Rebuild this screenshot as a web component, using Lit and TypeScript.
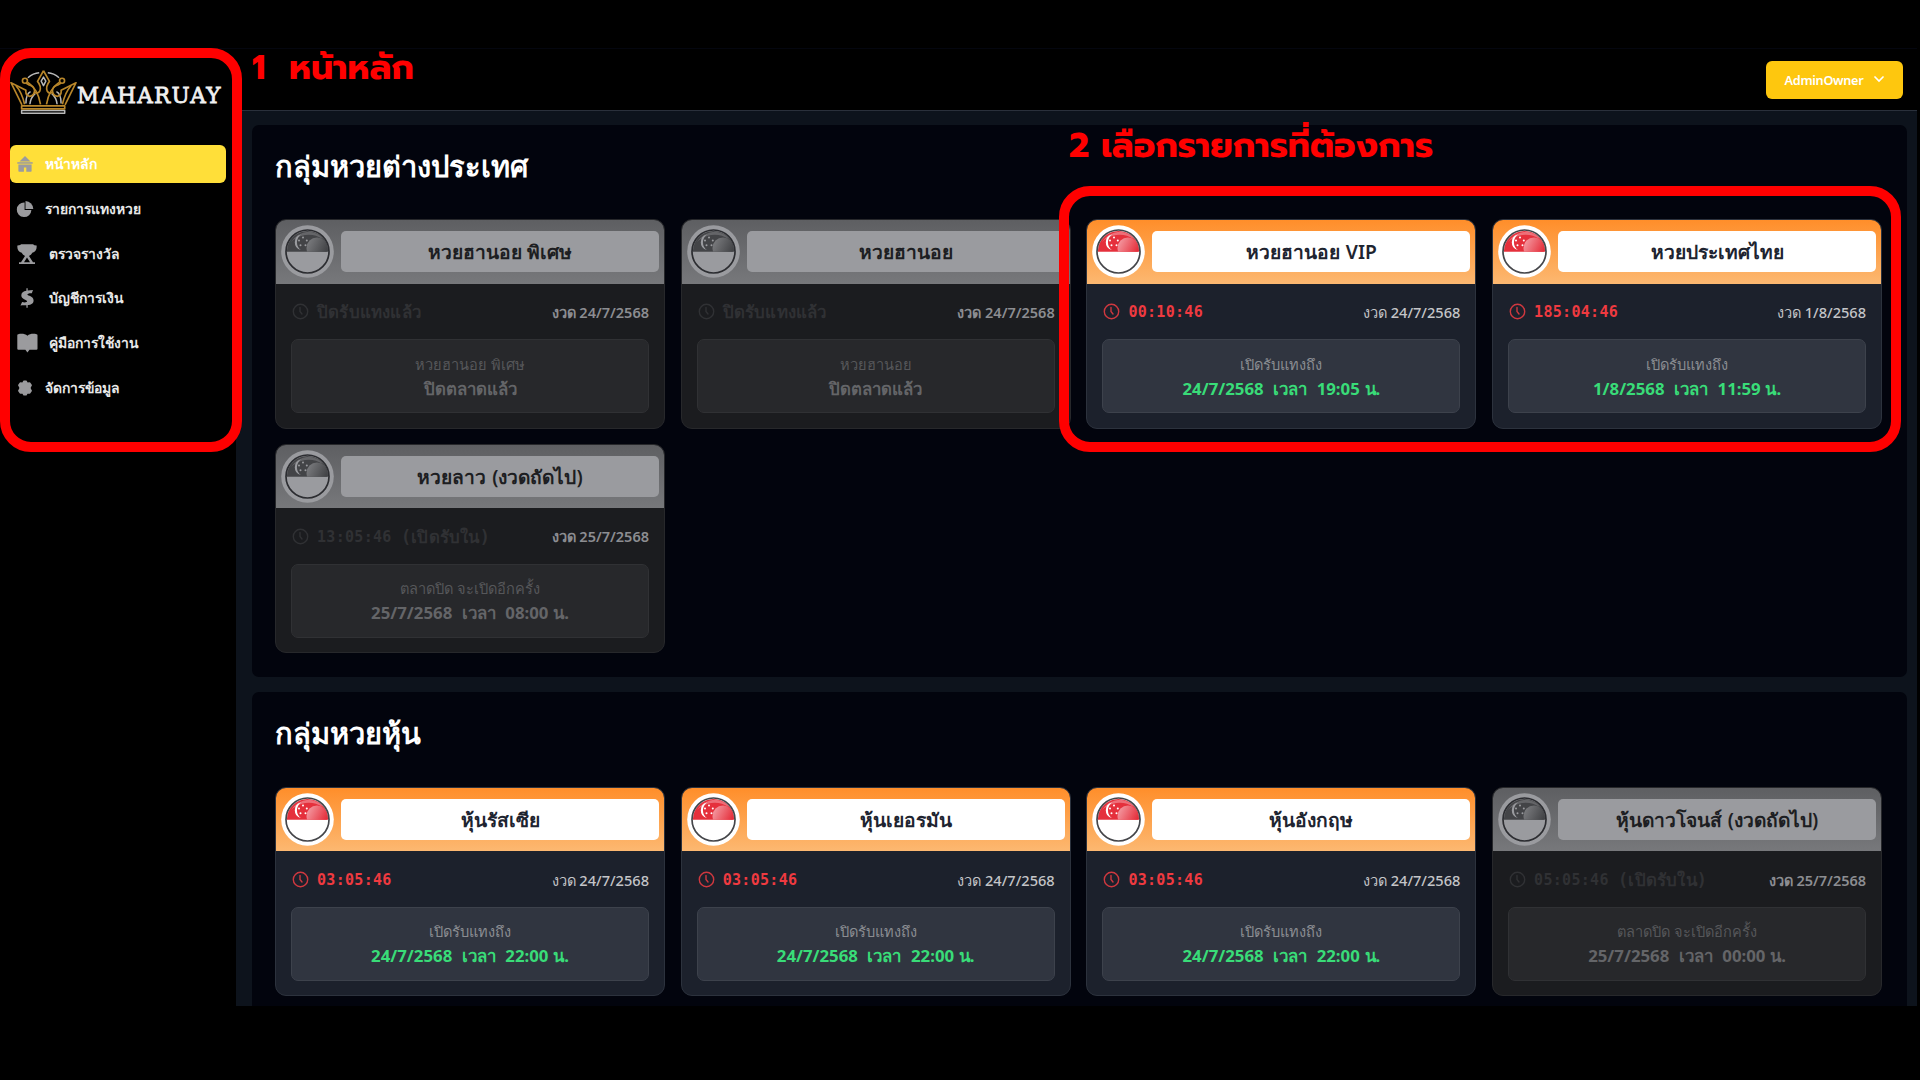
import { LitElement, html, svg, css, nothing } from "lit";
import { customElement, property } from "lit/decorators.js";
import { classMap } from "lit/directives/class-map.js";

interface Round {
  name: string;
  timer?: string;
  note?: string;
  draw: string;
  label: string;
  value: string;
  closed?: boolean;
}

const SANS = css`"Noto Sans", "Open Sans", sans-serif`;

const foreign: Round[] = [
  { name: "หวยฮานอย พิเศษ", note: "ปิดรับแทงแล้ว", draw: "งวด 24/7/2568", label: "หวยฮานอย พิเศษ", value: "ปิดตลาดแล้ว", closed: true },
  { name: "หวยฮานอย", note: "ปิดรับแทงแล้ว", draw: "งวด 24/7/2568", label: "หวยฮานอย", value: "ปิดตลาดแล้ว", closed: true },
  { name: "หวยฮานอย VIP", timer: "00:10:46", draw: "งวด 24/7/2568", label: "เปิดรับแทงถึง", value: "24/7/2568  เวลา  19:05 น." },
  { name: "หวยประเทศไทย", timer: "185:04:46", draw: "งวด 1/8/2568", label: "เปิดรับแทงถึง", value: "1/8/2568  เวลา  11:59 น." },
  { name: "หวยลาว (งวดถัดไป)", timer: "13:05:46 ", note: "(เปิดรับใน)", draw: "งวด 25/7/2568", label: "ตลาดปิด จะเปิดอีกครั้ง", value: "25/7/2568  เวลา  08:00 น.", closed: true },
];

const stocks: Round[] = [
  { name: "หุ้นรัสเซีย", timer: "03:05:46", draw: "งวด 24/7/2568", label: "เปิดรับแทงถึง", value: "24/7/2568  เวลา  22:00 น." },
  { name: "หุ้นเยอรมัน", timer: "03:05:46", draw: "งวด 24/7/2568", label: "เปิดรับแทงถึง", value: "24/7/2568  เวลา  22:00 น." },
  { name: "หุ้นอังกฤษ", timer: "03:05:46", draw: "งวด 24/7/2568", label: "เปิดรับแทงถึง", value: "24/7/2568  เวลา  22:00 น." },
  { name: "หุ้นดาวโจนส์ (งวดถัดไป)", timer: "05:05:46 ", note: "(เปิดรับใน)", draw: "งวด 25/7/2568", label: "ตลาดปิด จะเปิดอีกครั้ง", value: "25/7/2568  เวลา  00:00 น.", closed: true },
];

const icons = {
  home: svg`<path d="M8 0 13.500 5.600H2.500Z"/><path d="M.3 6.200h15.400v1.500H.3Z"/><path d="M1.400 8.500h13.200V15a.8.8 0 0 1-.8.8H9.300v-4.400H6.900v4.400H2.200a.8.8 0 0 1-.8-.8Z"/>`,
  pie: svg`<path d="M7.600 1.500v7.500h6.800A7.300 7.300 0 1 1 7.600 1.500Z"/><path d="M8.500 0A8 8 0 0 1 16.300 8H8.500Z"/>`,
  trophy: svg`<path d="M4 .2h12q1 1.300 3.600 1.300c.5 4-1.300 6.500-4.300 7.300-.8 1.500-1.900 2.500-3.300 3.100L16 18.200h2V20H2v-1.800h2l4-6.300C6.600 11.300 5.500 10.300 4.700 8.800 1.700 8-.1 5.500.4 1.500 3 1.500 4 .2 4 .2ZM10 13.400l-3 4.800h6Z"/>`,
  dollar: svg`<path d="M9.400.2h1.300v2.400l5.300-.6-1.200 3.200c-2.600-.2-4.400.4-4.400 1.400.2 1.400 6.200 1.500 6.200 6 0 3-2.400 4.400-5.900 4.500v2.700H9.400v-2.600c-2.200-.1-4.400-.1-5.900.3l1.600-3.400c2.300.5 5 .4 5-.8-.2-1.600-5.800-1.700-5.800-6C4.300 4.600 6.300 3 9.400 2.700Z"/>`,
  book: svg`<path d="M1.200 1.200C4 .6 8 .5 10.400 2.700 12.800.5 16.800.6 19.600 1.200a1 1 0 0 1 .9 1v13.600a1 1 0 0 1-1 1h-7L10.400 19.400l-2-2.600H1.300a1 1 0 0 1-1-1V2.200a1 1 0 0 1 .9-1Z"/>`,
  gear: svg`<path stroke="#9b9b9e" stroke-width="1.600" stroke-linejoin="round" d="M7 1.200h2l1.200 2.100 2.500-.2 1.400 2.200L13 7.200v1.600l1.100 1.900-1.400 2.200-2.500-.2L9 14.800H7l-1.200-2.100-2.500.2-1.400-2.200L3 8.800V7.200L1.900 5.300l1.400-2.200 2.500.2Z"/>`,
};

const menu = [
  { label: "หน้าหลัก", icon: icons.home, size: 16 },
  { label: "รายการแทงหวย", icon: icons.pie, size: 16 },
  { label: "ตรวจรางวัล", icon: icons.trophy, size: 20 },
  { label: "บัญชีการเงิน", icon: icons.dollar, size: 20 },
  { label: "คู่มือการใช้งาน", icon: icons.book, size: 20 },
  { label: "จัดการข้อมูล", icon: icons.gear, size: 16 },
];

@customElement("round-card")
export class RoundCard extends LitElement {
  @property({ attribute: false }) round!: Round;

  static styles = css`
    :host { display: block; font-family: ${SANS}; }
    .card {
      box-sizing: border-box; height: 209.600px; border: 1px solid #2c323d; border-radius: 11px;
      background: #1c212c; overflow: hidden; display: flex; flex-direction: column;
    }
    .head {
      flex: none; height: 63.500px; box-sizing: border-box; display: flex; align-items: center;
      gap: 7px; padding: 0 5px; background: linear-gradient(#ff8e2a, #fcb871);
    }
    .flag { flex: none; width: 53px; height: 53px; display: block; }
    .name {
      flex: 1; height: 41px; border-radius: 5px; background: #fff; color: #1e2430;
      display: flex; align-items: center; justify-content: center;
      font-size: 19.200px; font-weight: 600; white-space: pre; word-spacing: 1px;
    }
    .body { flex: 1; display: flex; flex-direction: column; padding: 20.200px 15px 14px; }
    .line { height: 16px; display: flex; align-items: center; padding-left: 1px; }
    .clock { width: 17px; height: 17px; flex: none; }
    .timer {
      margin-left: 8px; flex: 1; display: flex; align-items: center; color: #ef3a40; white-space: pre;
      font-family: "DejaVu Sans Mono", ${SANS}; font-weight: 700; font-size: 15px; letter-spacing: 0.300px; line-height: 17px;
      padding-top: 2px;
    }
    .wait { font-size: 16.800px; letter-spacing: 0.200px; }
    .draw { color: #c4c5c8; font-size: 14.600px; font-weight: 500; line-height: 16px; white-space: pre; }
    .info {
      margin-top: 19.400px; height: 74px; box-sizing: border-box; border: 1px solid #3d424c;
      border-radius: 7px; background: #303540; display: flex; flex-direction: column;
      align-items: center; padding-top: 11.300px;
    }
    .label { color: #8b8d92; font-size: 14.600px; line-height: 24px; white-space: pre; word-spacing: 1px; }
    .value { color: #39dc78; font-size: 16.800px; font-weight: 700; line-height: 26px; white-space: pre; word-spacing: 0.400px; }
    .closed { background: #1b1c1f; border-color: #27282b; }
    .closed .head { background: linear-gradient(#5e5f62, #77787b); }
    .closed .name { background: #9a9b9f; color: #1d1e22; }
    .closed .timer { color: #303134; }
    .closed .draw { color: #8c8d91; font-weight: 600; font-size: 14.500px; }
    .closed .info { background: #27282b; border-color: #303134; }
    .closed .label { color: #56575a; }
    .closed .value { color: #646568; }
  `;

  render() {
    const r = this.round;
    const off = !!r.closed;
    const paper = off ? "#9a9b9f" : "#fff";
    const dark = off ? "#434447" : "#e5303c";
    const light = off ? "#7b7c7f" : "#f49aa2";
    return html`
      <div class=${classMap({ card: true, closed: off })}>
        <div class="head">
          <svg class="flag" viewBox="0 0 53 53">
            <defs>
              <linearGradient id="gloss" x1="0" y1="0" x2="1" y2="0.5">
                <stop offset="0.1" stop-color=${light} /><stop offset="1" stop-color=${dark} />
              </linearGradient>
              <clipPath id="top"><path d="M5 5h43v21.800H5Z" /></clipPath>
            </defs>
            <circle cx="26.500" cy="26.500" r="26.300" fill=${paper} />
            <g clip-path="url(#top)">
              <circle cx="26.500" cy="26.500" r="20.600" fill=${dark} />
              <circle cx="36" cy="23" r="10.500" fill="url(#gloss)" />
              <path d="M10 17Q17 7.500 27 6.800Q37 7 42 14Q33 8.500 24 10Q16 11.500 10 17Z" fill=${light} opacity="0.600" />
            </g>
            <path d="M20 9.500a8 8 0 0 0 0 15.600a9.500 9.500 0 0 1 0-15.600Z" fill=${paper} />
            <g fill=${paper}>
              <circle cx="22" cy="12.500" r="1" /><circle cx="18" cy="15.600" r="1" /><circle cx="25.800" cy="15.600" r="1" />
              <circle cx="19.500" cy="20.300" r="1" /><circle cx="24.500" cy="20.300" r="1" />
            </g>
            <circle cx="26.500" cy="26.500" r="21.500" fill="none" stroke=${off ? "#2c2d31" : "#45464a"} stroke-width="1.700" />
          </svg>
          <div class="name">${r.name}</div>
        </div>
        <div class="body">
          <div class="line">
            <svg class="clock" viewBox="0 0 17 17" fill="none" stroke=${off ? "#303134" : "#cf383f"} stroke-width="1.400" stroke-linecap="round">
              <circle cx="8.500" cy="8.500" r="7.200" /><path d="M8 4.500V8.500L10 11" />
            </svg>
            <div class="timer">${r.timer ? html`<span>${r.timer}</span>` : nothing}${r.note ? html`<span class="wait">${r.note}</span>` : nothing}</div>
            <span class="draw">${r.draw}</span>
          </div>
          <div class="info">
            <div class="label">${r.label}</div>
            <div class="value">${r.value}</div>
          </div>
        </div>
      </div>
    `;
  }
}

@customElement("app-root")
export class AppRoot extends LitElement {
  static styles = css`
    :host {
      display: block; position: relative; width: 1920px; height: 1080px; box-sizing: border-box;
      padding: 48px 3px 74px 0; background: #000; overflow: hidden; font-family: ${SANS};
    }
    .screen { height: 958px; display: flex; background: #000; border-top: 1px solid #04060f; box-sizing: border-box; overflow: hidden; }
    .side { flex: none; width: 236px; padding: 20px 10px 0; box-sizing: border-box; }
    .logo { display: flex; align-items: center; height: 46px; }
    .crown { flex: none; width: 67px; height: 46px; }
    .brand {
      color: #f0f0f0; font-family: "DejaVu Serif", serif; font-size: 21.500px; -webkit-text-stroke: 0.800px #f0f0f0;
      letter-spacing: 1.300px; line-height: 38px; padding-top: 8px;
    }
    .menu { margin-top: 30px; display: flex; flex-direction: column; gap: 7.400px; }
    .item {
      height: 37.500px; display: flex; align-items: center; gap: 12px; padding-left: 7px; border-radius: 6px;
      color: #e8e8e8; font-size: 13.900px; font-weight: 600; white-space: pre;
    }
    .item svg { fill: #9b9b9e; flex: none; overflow: visible; }
    .active { background: #ffdf39; color: #fff; }
    .page { flex: 1; display: flex; flex-direction: column; min-width: 0; }
    .bar {
      flex: none; height: 62px; box-sizing: border-box; border-bottom: 1px solid #2a303b;
      display: flex; justify-content: flex-end; padding: 12px 14px 0 0;
    }
    .user {
      width: 137px; height: 37.500px; box-sizing: border-box; border-radius: 6px; background: #fec70e; color: #fff;
      display: flex; align-items: center; justify-content: center; gap: 11px;
      font-family: "Noto Sans", sans-serif; font-size: 12.700px; font-weight: 600; letter-spacing: -0.300px;
    }
    .user svg { width: 10px; height: 10px; margin-bottom: 2px; }
    .main { flex: 1; min-height: 0; background: #0d131c; padding: 13.500px 10px 0 16px; display: flex; flex-direction: column; gap: 14.800px; overflow: hidden; }
    .panel { flex: none; box-sizing: border-box; background: #02040d; border-radius: 7px; padding: 22px 24px 24px 23px; }
    .title { margin: 0; color: #fff; font-size: 29px; line-height: 38px; font-weight: 700; white-space: pre; }
    .grid { margin-top: 34.700px; display: grid; grid-template-columns: repeat(4, 390px); column-gap: 15.700px; row-gap: 15px; }
    .frame { position: absolute; box-sizing: border-box; border: 10px solid #f00; border-radius: 31px; }
    .one { left: 0; top: 48px; width: 242px; height: 404px; }
    .two { left: 1059px; top: 186px; width: 842px; height: 266px; }
    .note {
      position: absolute; color: #f00; font-family: "Prompt", ${SANS}; font-weight: 700; white-space: pre; line-height: 40px; font-size: 34.600px;
    }
    .note-one { left: 252px; top: 48px; }
    .note-two { left: 1069px; top: 126px; }
  `;

  private panel(title: string, rounds: Round[]) {
    return html`<section class="panel">
      <h2 class="title">${title}</h2>
      <div class="grid">${rounds.map((r) => html`<round-card .round=${r}></round-card>`)}</div>
    </section>`;
  }

  render() {
    return html`
      <div class="screen">
        <aside class="side">
          <div class="logo">
            <svg class="crown" viewBox="30 86 202 138" fill="none" stroke-linejoin="round" stroke-width="4.500">
              <g stroke="#b9b9b9">
                <path d="M84 112Q100 98 118 97M178 112Q162 98 144 97M78 190Q78 160 92 154M184 190Q184 160 170 154M90 192Q92 172 106 160M172 192Q170 172 156 160" />
                <path d="M131 110 138 122 131 136 124 122Z" /><path d="M65 211H195V219H65Z" />
              </g>
              <g stroke="#b8862a" stroke-width="5">
                <path d="M131 91 149 123Q137 138 142 152Q148 162 158 156M131 91 113 123Q125 138 120 152Q114 162 104 156" />
                <path d="M66 194 33 127 78 150Q76 164 88 168Q104 168 104 150Q102 138 88 134L78 128" />
                <path d="M196 194 229 127 184 150Q186 164 174 168Q158 168 158 150Q160 138 174 134L184 128" />
                <path d="M48 136Q66 156 74 192M214 136Q196 156 188 192M84 126Q114 146 122 192M178 126Q148 146 140 192" />
                <circle cx="75" cy="121" r="7.500" /><circle cx="187" cy="121" r="7.500" />
                <path d="M65 197H195V206H65Z" />
              </g>
            </svg>
            <span class="brand">MAHARUAY</span>
          </div>
          <nav class="menu">
            ${menu.map(
              (m, i) => html`<div class=${classMap({ item: true, active: i === 0 })}>
                <svg width=${m.size} height=${m.size} viewBox="0 0 ${m.size} ${m.size}">${m.icon}</svg><span>${m.label}</span>
              </div>`,
            )}
          </nav>
        </aside>
        <div class="page">
          <header class="bar">
            <div class="user">
              <span>AdminOwner</span>
              <svg viewBox="0 0 10 10" fill="none" stroke="#fff" stroke-width="1.700" stroke-linecap="round"><path d="M1 3 5 7 9 3" /></svg>
            </div>
          </header>
          <main class="main">${this.panel("กลุ่มหวยต่างประเทศ", foreign)}${this.panel("กลุ่มหวยหุ้น", stocks)}</main>
        </div>
      </div>
      <div class="frame one"></div>
      <div class="frame two"></div>
      <div class="note note-one">1  หน้าหลัก</div>
      <div class="note note-two">2 เลือกรายการที่ต้องการ</div>
    `;
  }
}
